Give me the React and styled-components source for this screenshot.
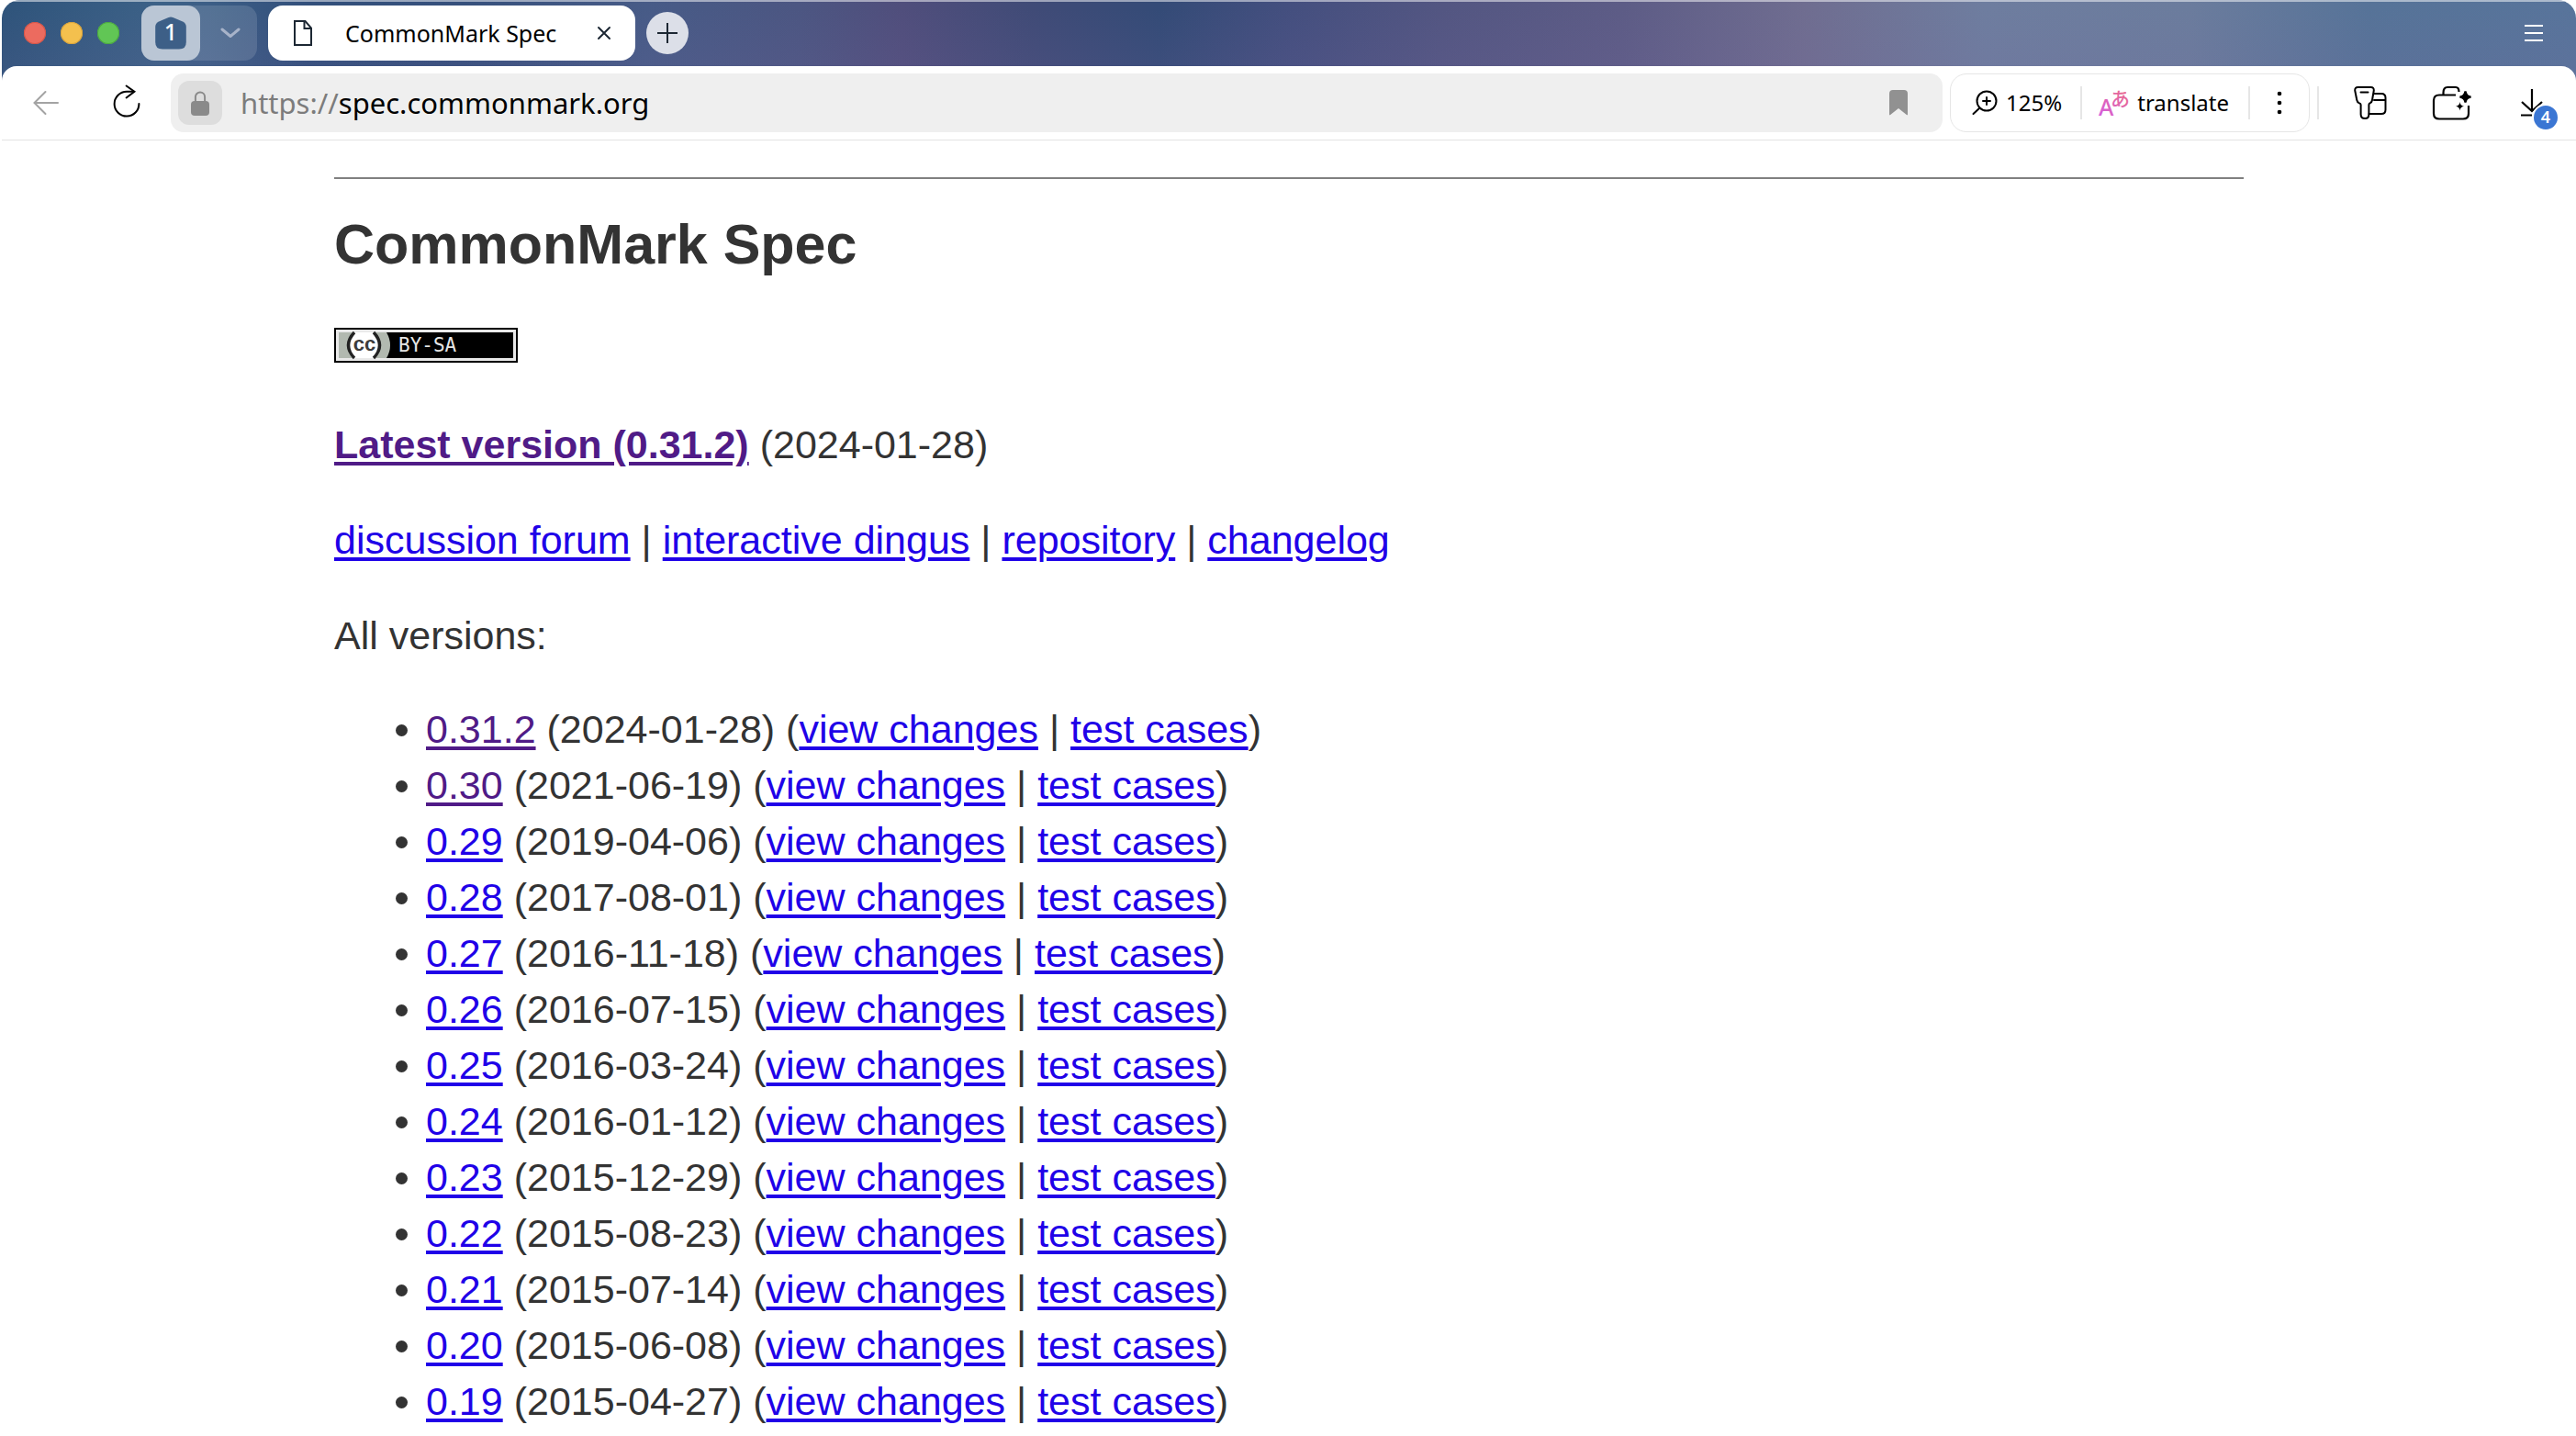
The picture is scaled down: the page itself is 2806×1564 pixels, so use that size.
import React from "react";
import styled, { createGlobalStyle } from "styled-components";

const UI_FONT = '"Noto Sans", "Open Sans", sans-serif';
const PAGE_FONT = '"Liberation Sans", Arial, Helvetica, sans-serif';

const GlobalStyle = createGlobalStyle`
  *, *::before, *::after { box-sizing: border-box; }
  html, body { margin: 0; background: #fff; }
  html { overflow: hidden; }
  button, input { font: inherit; color: inherit; border: 0; padding: 0; margin: 0; background: none; }
  svg { display: block; flex: none; overflow: visible; }
`;

const Window = styled.div`
  margin-left: 2px;
  font-family: ${UI_FONT};
`;

const Frame = styled.div`
  border-radius: 20px 20px 0 0;
  overflow: hidden;
  background:
    linear-gradient(180deg, rgba(120, 100, 170, 0) 10px, rgba(120, 100, 160, 0.16) 90px),
    linear-gradient(
      90deg,
      #2f547b 0%, #3c6187 6%, #3c5e86 8%, #324f7b 12%, #36507c 18%, #475b87 25%,
      #4c5682 31%, #504e7c 35%, #404b77 40%, #344b77 45%, #444f7f 50%, #535682 56%,
      #5d5c86 63%, #6f6d90 70%, #6e7d9f 77%, #6b7c9d 85%, #567398 92%, #58749b 100%
    );
`;

const TabStrip = styled.header`
  display: flex;
  align-items: center;
  height: 72px;
  padding: 0 36px 2px 24px;
  border-top: 2px solid rgba(255, 255, 255, 0.5);
`;

const Lights = styled.div`
  display: flex;
  gap: 16px;
  margin-right: 24px;
`;

const Light = styled.button`
  width: 24px;
  height: 24px;
  border-radius: 50%;
  background: ${(p) => p.$fill};
  box-shadow: inset 0 0 0 1px ${(p) => p.$edge};
`;

const TabGroup = styled.div`
  display: flex;
  width: 126px;
  height: 60px;
  margin-right: 12px;
  border-radius: 14px;
  background: rgba(255, 255, 255, 0.13);
`;

const GroupButton = styled.button`
  display: grid;
  place-items: center;
  width: 64px;
  border-radius: 14px;
  background: #bac6d5;
  color: #fff;
  font-size: 26px;
`;

const GroupMenu = styled.button`
  display: grid;
  place-items: center;
  flex: 1;
  padding-left: 4px;
`;

const Tab = styled.div`
  display: flex;
  align-items: center;
  width: 400px;
  height: 60px;
  margin-right: 12px;
  padding: 0 26px;
  border-radius: 16px;
  background: #fff;
  color: #000;
`;

const TabTitle = styled.span`
  flex: 1;
  margin-left: 34px;
  font-size: 25px;
  line-height: 34px;
  white-space: nowrap;
`;

const TabClose = styled.button`
  display: grid;
  place-items: center;
  width: 16px;
  height: 16px;
`;

const NewTab = styled.button`
  display: grid;
  place-items: center;
  width: 46px;
  height: 46px;
  border-radius: 50%;
  background: #dcdfe8;
`;

const WindowMenu = styled.button`
  margin-left: auto;
`;

const Toolbar = styled.nav`
  display: flex;
  align-items: center;
  height: 81px;
  padding: 0 26px;
  border-bottom: 1px solid #e3e3e3;
  border-radius: 16px 16px 0 0;
  background: #fff;
  color: #000;
`;

const ToolButton = styled.button`
  display: grid;
  place-items: center;
  width: 44px;
  height: 44px;
  margin-right: ${(p) => p.$after || 0}px;
`;

const AddressBar = styled.div`
  display: flex;
  align-items: center;
  flex: 1;
  height: 64px;
  margin-right: 8px;
  padding: 0 38px 0 8px;
  border-radius: 14px;
  background: #efefef;
`;

const SiteInfo = styled.button`
  display: grid;
  place-items: center;
  width: 48px;
  height: 48px;
  margin-right: 20px;
  border-radius: 12px;
  background: #dddddd;
`;

const UrlLabel = styled.label`
  display: flex;
  flex: 1;
  align-items: center;
  font-size: 31px;
  line-height: 44px;
`;

const Scheme = styled.span`
  color: #7c7c7c;
`;

const UrlInput = styled.input`
  flex: 1;
  min-width: 0;
  height: 44px;
  outline: 0;
`;

const PageTools = styled.div`
  display: flex;
  align-items: center;
  height: 64px;
  border: 1px solid #e6e6e6;
  border-radius: 18px;
  margin-right: 8px;
  padding: 0 20px 0 23px;
`;

const PageTool = styled.button`
  display: flex;
  align-items: center;
  gap: ${(p) => p.$gap || 0}px;
  height: 44px;
  font-size: 24px;
  line-height: 32px;
`;

const Divider = styled.span`
  width: 2px;
  height: 36px;
  margin: 0 ${(p) => p.$after}px 0 ${(p) => p.$before}px;
  background: #e6e6e6;
`;

const Downloads = styled(ToolButton)`
  position: relative;
`;

const Badge = styled.span`
  position: absolute;
  right: -6px;
  bottom: -7px;
  width: 26px;
  height: 26px;
  border-radius: 50%;
  background: #3b76d3;
  box-shadow: 0 0 0 2px #fff;
  color: #fff;
  font-size: 18px;
  font-weight: 600;
  line-height: 25px;
  text-align: center;
`;

const Page = styled.main`
  max-width: 2080px;
  margin: 0 auto;
  padding: 40px 0;
  color: #333;
  font-family: ${PAGE_FONT};
  font-size: 43px;
  line-height: 61px;
`;

const Rule = styled.hr`
  height: 2px;
  margin: 0 0 28px;
  border: 0;
  background: #808080;
`;

const Title = styled.h1`
  margin: 0 0 41px;
  font-size: 61px;
  line-height: 86px;
`;

const Paragraph = styled.p`
  margin: 0 0 43px;
`;

const License = styled.a`
  display: inline-block;
  svg { display: inline-block; vertical-align: baseline; }
`;

const Link = styled.a`
  color: ${(p) => (p.$visited ? "#501b87" : "#2000e8")};
  font-weight: ${(p) => (p.$strong ? 700 : 400)};
  text-decoration-thickness: 4px;
  text-underline-offset: 4px;
`;

const VersionList = styled.ul`
  margin: -2px 0 0;
  padding-left: 100px;
`;

const versions = [
  ["0.31.2", "2024-01-28", true],
  ["0.30", "2021-06-19", true],
  ["0.29", "2019-04-06"],
  ["0.28", "2017-08-01"],
  ["0.27", "2016-11-18"],
  ["0.26", "2016-07-15"],
  ["0.25", "2016-03-24"],
  ["0.24", "2016-01-12"],
  ["0.23", "2015-12-29"],
  ["0.22", "2015-08-23"],
  ["0.21", "2015-07-14"],
  ["0.20", "2015-06-08"],
  ["0.19", "2015-04-27"],
];

const HomeCount = () => (
  <svg width="34" height="36" viewBox="0 0 34 36">
    <path d="M14.6 1 L4 5.6 Q0.4 7.4 0.2 11 V28 Q0.2 35.6 8 35.6 H26 Q33.8 35.6 33.8 28 V11 Q33.6 7.4 30 5.6 L19.4 1 Q17 0 14.6 1Z" fill="#3d5f87" />
    <text x="17" y="26" textAnchor="middle" fill="#fff" fontSize="25" fontWeight="500">1</text>
  </svg>
);

const Chevron = () => (
  <svg width="22" height="12" viewBox="0 0 22 12" fill="none" stroke="#a7b3c9" strokeWidth="3" strokeLinecap="round" strokeLinejoin="round">
    <path d="M2 2 L11 9.5 L20 2" />
  </svg>
);

const Doc = () => (
  <svg width="24" height="28" viewBox="0 0 24 28" fill="none" stroke="#1c2733" strokeWidth="2">
    <path d="M3 1 H14.5 L21 8.5 V27 H3Z" />
    <path d="M13.5 1 V9 H21" />
  </svg>
);

const Cross = () => (
  <svg width="16" height="16" viewBox="0 0 16 16" stroke="#1c2733" strokeWidth="2" strokeLinecap="round">
    <path d="M2 2 L14 14 M14 2 L2 14" />
  </svg>
);

const Plus = () => (
  <svg width="22" height="22" viewBox="0 0 22 22" stroke="#1c2733" strokeWidth="2">
    <path d="M11 0 V22 M0 11 H22" />
  </svg>
);

const Burger = () => (
  <svg width="20" height="18" viewBox="0 0 20 18" fill="#fff">
    <rect width="20" height="2" />
    <rect y="8" width="20" height="2" />
    <rect y="16" width="20" height="2" />
  </svg>
);

const Back = () => (
  <svg width="28" height="26" viewBox="0 0 28 26" fill="none" stroke="#a3a3a3" strokeWidth="2" strokeLinecap="round">
    <path d="M27 13 H2 M13.5 1 L1.5 13 L13.5 25" />
  </svg>
);

const Reload = () => (
  <svg width="36" height="40" viewBox="0 0 36 40" fill="none" stroke="#000" strokeWidth="2" strokeLinecap="round">
    <path d="M31.4 21 A13.4 13.4 0 1 1 18 7.8 H25.5" />
    <path d="M17.6 1.5 L26.4 7.8 L17.6 14.5" />
  </svg>
);

const Lock = () => (
  <svg width="20" height="27" viewBox="0 0 20 27">
    <path d="M4.9 12 V6.6 A5.1 5.1 0 0 1 15.1 6.6 V12" fill="none" stroke="#8a8a8a" strokeWidth="2" />
    <rect y="11" width="20" height="16" rx="4" fill="#8a8a8a" />
  </svg>
);

const Bookmark = () => (
  <svg width="20" height="28" viewBox="0 0 20 28">
    <path d="M4 0 H16 Q20 0 20 4 V26.4 Q20 27.8 18.8 27 L10 20 L1.2 27 Q0 27.8 0 26.4 V4 Q0 0 4 0Z" fill="#919191" />
  </svg>
);

const Magnifier = () => (
  <svg width="28" height="28" viewBox="0 0 28 28" fill="none" stroke="#000" strokeWidth="2" strokeLinecap="round">
    <circle cx="16" cy="12" r="10.5" />
    <path d="M8.5 19.5 L1.5 26 M16 8 V16 M12 12 H20" />
  </svg>
);

const TranslateMark = () => (
  <svg width="34" height="44" viewBox="0 0 34 44" fontWeight="500">
    <defs>
      <linearGradient id="ink" gradientUnits="userSpaceOnUse" x1="0" y1="38" x2="34" y2="4">
        <stop offset="0.1" stopColor="#d65fd8" />
        <stop offset="0.9" stopColor="#ea6a88" />
      </linearGradient>
    </defs>
    <text x="0" y="36" fontSize="25" fill="url(#ink)">A</text>
    <text x="13" y="25" fontSize="21" fontFamily='"Noto Sans CJK JP", sans-serif' fill="url(#ink)">あ</text>
  </svg>
);

const Dots = () => (
  <svg width="24" height="28" viewBox="0 0 24 28">
    <circle cx="12" cy="4" r="2.3" />
    <circle cx="12" cy="14" r="2.3" />
    <circle cx="12" cy="24" r="2.3" />
  </svg>
);

const Keys = () => (
  <svg width="38" height="38" viewBox="0 0 38 38" fill="none" stroke="#000" strokeWidth="2" strokeLinejoin="round" strokeLinecap="round">
    <path d="M23 9 H31 Q35.5 9 35.5 13.5 V26.5 Q35.5 31 31 31 H17.5 M23 16 H35" />
    <path d="M5.5 2 H19.5 Q23 2 22.8 5.5 L21 16 Q20.6 18.4 18.8 19.2 Q17.4 19.6 17.4 21 V31.5 Q17.4 36 13.2 36 Q8.6 36 8.6 31.5 V21 Q8.6 19.6 6.6 19.2 Q4.8 18.4 4.3 16 L2.2 5.5 Q2 2 5.5 2Z" />
    <path d="M8.5 7.5 H16.5" />
  </svg>
);

const Briefcase = () => (
  <svg width="44" height="40" viewBox="0 0 44 40" fill="none" stroke="#000" strokeWidth="2.2">
    <path d="M27 11.5 H9 Q3 11.5 3 17.5 V31.5 Q3 37.5 9 37.5 H35 Q41 37.5 41 31.5 V23" />
    <path d="M13.5 11.5 V9 Q13.5 3 18 3 H27 Q30.5 3 30.5 8" />
    <path d="M37.5 7.5 Q38.2 13 43.5 13.7 Q38.2 14.4 37.5 19.7 Q36.8 14.4 31.5 13.7 Q36.8 13 37.5 7.5Z" fill="#000" />
    <path d="M31.5 19 Q32 23.3 36 23.8 Q32 24.3 31.5 28.4 Q31 24.3 27 23.8 Q31 23.3 31.5 19Z" fill="#000" stroke="none" />
  </svg>
);

const Download = () => (
  <svg width="26" height="32" viewBox="0 0 26 32" fill="none" stroke="#000" strokeWidth="2.2">
    <path d="M13 1 V25 M2 15 L13 25 L24 15" />
    <path d="M1 29.5 H13" />
  </svg>
);

const LicenseBadge = () => (
  <svg width="200" height="38" viewBox="0 0 200 38" role="img" aria-label="Creative Commons BY-SA">
    <rect width="200" height="38" fill="#000" />
    <rect x="2" y="2" width="196" height="34" fill="#e9e9e9" />
    <rect x="5" y="5" width="190" height="28" fill="#000" />
    <path d="M5 5 H57 Q65 19 57 33 H5Z" fill="#b2b9b0" />
    <path d="M21 5 H45 Q55 19 45 33 H21 Q11 19 21 5Z" fill="#fff" />
    <path d="M22 5 Q9 19 22 33 M43 5 Q56 19 43 33" fill="none" stroke="#222" strokeWidth="3.4" />
    <text x="33" y="25" textAnchor="middle" fontFamily={PAGE_FONT} fontWeight="700" fontSize="22" fill="#3c3c3c">cc</text>
    <text x="70" y="26" fontFamily='"DejaVu Sans Mono", monospace' fontSize="21" fill="#e6e6e6">BY-SA</text>
  </svg>
);

export default function App() {
  return (
    <Window>
      <GlobalStyle />
      <Frame>
        <TabStrip>
          <Lights>
            <Light aria-label="Close window" $fill="#ec6b5f" $edge="#d35548" />
            <Light aria-label="Minimize window" $fill="#f4c04e" $edge="#d8a33c" />
            <Light aria-label="Zoom window" $fill="#61c655" $edge="#4ca93f" />
          </Lights>
          <TabGroup>
            <GroupButton aria-label="Tab group"><HomeCount /></GroupButton>
            <GroupMenu aria-label="Tab groups menu"><Chevron /></GroupMenu>
          </TabGroup>
          <Tab>
            <Doc />
            <TabTitle>CommonMark Spec</TabTitle>
            <TabClose aria-label="Close tab"><Cross /></TabClose>
          </Tab>
          <NewTab aria-label="New tab"><Plus /></NewTab>
          <WindowMenu aria-label="Menu"><Burger /></WindowMenu>
        </TabStrip>
        <Toolbar>
          <ToolButton aria-label="Back" $after={44}><Back /></ToolButton>
          <ToolButton aria-label="Reload" $after={26}><Reload /></ToolButton>
          <AddressBar>
            <SiteInfo aria-label="Site information"><Lock /></SiteInfo>
            <UrlLabel>
              <Scheme>https://</Scheme>
              <UrlInput type="text" aria-label="Address" defaultValue="spec.commonmark.org" />
            </UrlLabel>
            <button aria-label="Bookmark"><Bookmark /></button>
          </AddressBar>
          <PageTools>
            <PageTool $gap={9}><Magnifier />125%</PageTool>
            <Divider $before={20} $after={18} />
            <PageTool $gap={8}><TranslateMark />translate</PageTool>
            <Divider $before={21} $after={20} />
            <PageTool aria-label="More"><Dots /></PageTool>
          </PageTools>
          <Divider $before={0} $after={34} />
          <ToolButton aria-label="Passwords" $after={44}><Keys /></ToolButton>
          <ToolButton aria-label="Collections" $after={44}><Briefcase /></ToolButton>
          <Downloads aria-label="Downloads"><Download /><Badge>4</Badge></Downloads>
        </Toolbar>
      </Frame>
      <Page>
        <Rule />
        <Title>CommonMark Spec</Title>
        <Paragraph><License href="#license"><LicenseBadge /></License></Paragraph>
        <Paragraph>
          <Link href="#latest" $visited $strong>Latest version (0.31.2)</Link> (2024-01-28)
        </Paragraph>
        <Paragraph>
          <Link href="#forum">discussion forum</Link> | <Link href="#dingus">interactive dingus</Link> |{" "}
          <Link href="#repository">repository</Link> | <Link href="#changelog">changelog</Link>
        </Paragraph>
        <Paragraph>All versions:</Paragraph>
        <VersionList>
          {versions.map(([version, date, visited]) => (
            <li key={version}>
              <Link href={`#${version}`} $visited={visited}>{version}</Link> ({date}) (
              <Link href={`#${version}-changes`}>view changes</Link> |{" "}
              <Link href={`#${version}-tests`}>test cases</Link>)
            </li>
          ))}
        </VersionList>
      </Page>
    </Window>
  );
}
